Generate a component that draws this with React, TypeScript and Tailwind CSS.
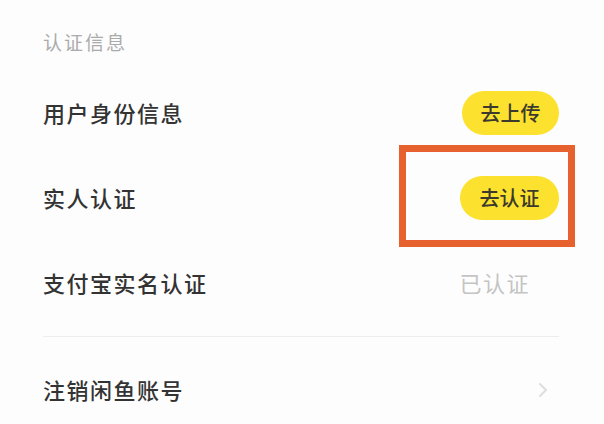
import React from 'react';

const font = { fontFamily: '"Noto Sans CJK SC", "Noto Sans", sans-serif' };

const App: React.FC = () => {
  return (
    <div
      className="relative w-[604px] h-[424px] overflow-hidden bg-[#fdfdfd] pl-[43px] pr-[45px]"
      style={font}
    >
      {/* Section header */}
      <div className="h-[70px] pt-[28px]">
        <p className="text-[19px] leading-[28px] tracking-[2px] text-[#ababab]">认证信息</p>
      </div>

      {/* Rows */}
      <div className="flex h-[85px] items-center justify-between">
        <span className="text-[22px] tracking-[1.5px] text-[#333] font-medium">用户身份信息</span>
        <button className="flex h-[44px] w-[97px] items-center justify-center rounded-full bg-[#fce22e] text-[20px] font-medium text-[#3b3a2c]">
          去上传
        </button>
      </div>
      <div className="flex h-[85px] items-center justify-between">
        <span className="text-[22px] tracking-[1.5px] text-[#333] font-medium">实人认证</span>
        <button className="flex h-[44px] w-[99px] items-center justify-center rounded-full bg-[#fce22e] text-[20px] font-medium text-[#3b3a2c]">
          去认证
        </button>
      </div>
      <div className="flex h-[85px] items-center justify-between">
        <span className="text-[22px] tracking-[1.5px] text-[#333] font-medium">支付宝实名认证</span>
        <span className="mr-[29px] text-[22px] tracking-[1.5px] text-[#c4c4c4]">已认证</span>
      </div>

      <div className="mt-[11px] h-[1px] bg-[#ededed]" />

      <div className="mt-[10px] flex h-[85px] items-center justify-between">
        <span className="text-[22px] tracking-[1.5px] text-[#333] font-medium">注销闲鱼账号</span>
        <svg width="10" height="16" viewBox="0 0 10 16" className="mr-[11px]">
          <path d="M2 2l6 6-6 6" fill="none" stroke="#dedede" strokeWidth="2" strokeLinecap="round" strokeLinejoin="round" />
        </svg>
      </div>

      {/* Highlight annotation */}
      <div className="absolute left-[399px] top-[145px] h-[102px] w-[176px] border-[7px] border-[#e7612e]" />
    </div>
  );
};

export default App;
